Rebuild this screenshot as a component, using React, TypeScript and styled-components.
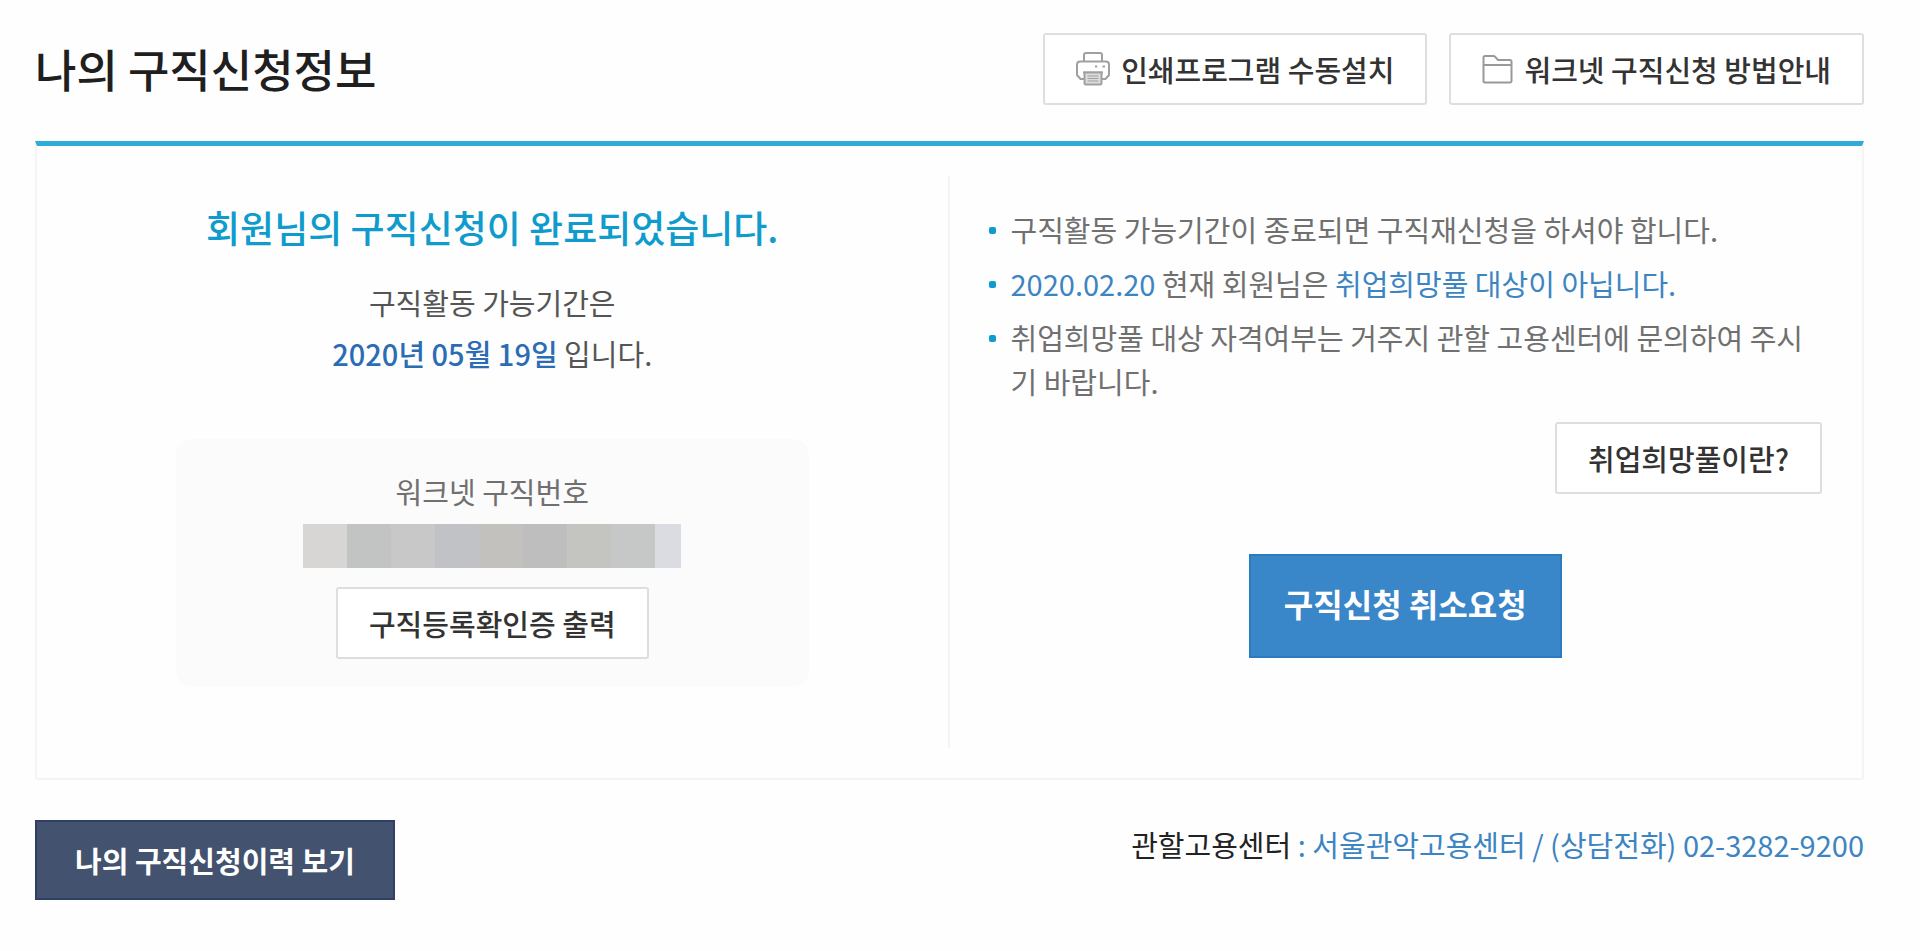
import React from "react";
import styled, { createGlobalStyle, css } from "styled-components";

const GlobalStyle = createGlobalStyle`
  *, *::before, *::after { box-sizing: border-box; }
  body {
    margin: 0;
    background: #fefefe;
    color: #707070;
    font-family: "Noto Sans CJK KR", "Noto Sans", sans-serif;
    font-size: 29px;
    line-height: 44px;
  }
  h1, h2, p, ul { margin: 0; padding: 0; }
  button { font-family: inherit; cursor: pointer; }
  a { color: inherit; text-decoration: none; }
`;

const Page = styled.main`
  padding: 33px 56px 52px 35px;
`;

const Header = styled.header`
  display: flex;
  align-items: center;
  justify-content: space-between;
  margin-bottom: 36px;
`;

const Title = styled.h1`
  color: #1f1f1f;
  font-size: 45px;
  font-weight: 500;
  line-height: 64px;
`;

const HeaderActions = styled.div`
  display: flex;
  gap: 22px;
`;

type ButtonKind = "outline" | "primary" | "dark";

const kinds = {
  outline: css`
    height: 72px;
    padding: 0 31px;
    border: 2px solid #dedede;
    border-radius: 3px;
    background: #fff;
    color: #333;
    font-size: 29px;
    font-weight: 500;
  `,
  primary: css`
    height: 104px;
    padding: 0 33px 6px;
    border: 2px solid #2a7bc0;
    background: #3986c9;
    color: #fff;
    font-size: 32px;
    font-weight: 700;
  `,
  dark: css`
    height: 80px;
    padding: 0 38px;
    border: 2px solid #2f4067;
    background: #43526f;
    color: #fff;
    font-size: 29px;
    font-weight: 700;
  `,
};

const Button = styled.button<{ $kind: ButtonKind }>`
  display: inline-flex;
  align-items: center;
  justify-content: center;
  gap: 11px;
  line-height: 44px;
  white-space: nowrap;
  ${({ $kind }) => kinds[$kind]}
`;

const Panel = styled.section`
  display: grid;
  grid-template-columns: 1fr 1fr;
  padding: 30px 4px 30px 0;
  border: 2px solid #f4f4f4;
  border-top: 5px solid #2eabd6;
  border-radius: 0 0 3px 3px;
`;

const StatusColumn = styled.div`
  display: flex;
  flex-direction: column;
  padding: 25px 139px 61px;
  text-align: center;
`;

const StatusTitle = styled.h2`
  color: #0f9ccd;
  font-size: 37px;
  font-weight: 500;
  line-height: 52px;
  white-space: nowrap;
`;

const Period = styled.p`
  margin-top: 24px;
  color: #555;
  font-size: 29px;
  line-height: 51px;
`;

const PeriodDate = styled.strong`
  color: #2a6db5;
  font-weight: 500;
`;

const NumberCard = styled.div`
  display: flex;
  flex-direction: column;
  align-items: center;
  margin-top: 60px;
  padding: 30px 0 28px;
  border-radius: 16px;
  background: #fbfbfb;
`;

const MaskedNumber = styled.div`
  display: flex;
  width: 378px;
  height: 44px;
  margin: 11px 0 19px;
`;

const MaskBlock = styled.span<{ $color: string }>`
  flex: 0 1 44px;
  background: ${({ $color }) => $color};

  &:last-child { flex: 1 1 0; }
`;

const GuideColumn = styled.div`
  display: flex;
  flex-direction: column;
  padding: 31px 36px 61px 39px;
  border-left: 2px solid #f4f4f4;
`;

const GuideList = styled.ul`
  display: flex;
  flex-direction: column;
  gap: 10px;
  list-style: none;
`;

const GuideItem = styled.li`
  display: flex;
  gap: 15px;
  word-break: break-all;

  &::before {
    content: "";
    flex: none;
    width: 7px;
    height: 7px;
    margin-top: 20px;
    border-radius: 2px;
    background: #0f9ccd;
  }
`;

const Blue = styled.span`
  color: #3d84c2;
`;

const GuideMore = styled.div`
  display: flex;
  justify-content: flex-end;
  margin-top: 19px;
`;

const CancelRow = styled.div`
  display: flex;
  justify-content: center;
  margin-top: 60px;
`;

const Footer = styled.footer`
  display: flex;
  align-items: flex-start;
  justify-content: space-between;
  margin-top: 40px;
`;

const Center = styled.p`
  padding-top: 2px;
  color: #3d84c2;
`;

const CenterLabel = styled.span`
  color: #222;
`;

const PrinterIcon = () => (
  <svg width="34" height="34" viewBox="0 0 34 34" fill="none" stroke="#a0a0a0" strokeWidth="2" aria-hidden="true">
    <path d="M8 9.500V3a2 2 0 0 1 2-2h14a2 2 0 0 1 2 2v6.500" />
    <path d="M8 27H4.500l-3.500-4V12.500a3 3 0 0 1 3-3h26a3 3 0 0 1 3 3V23l-3.500 4H26" />
    <path d="M7 20.500h20" />
    <path d="M8.500 20.500h17V31a1.500 1.500 0 0 1-1.500 1.500H10A1.500 1.500 0 0 1 8.500 31z" fill="#dcdcdc" />
    <path d="M11.500 24h11M11.500 26.500h11M11.500 29h11" strokeWidth="1" />
    <path d="M19 14.500h2.200M26.500 14.500h2.500" strokeWidth="2" />
  </svg>
);

const FolderIcon = () => (
  <svg width="31" height="30" viewBox="0 0 31 30" fill="none" stroke="#999" strokeWidth="2" aria-hidden="true">
    <path d="M1.500 27V3.500A1.500 1.500 0 0 1 3 2h8.500a2 2 0 0 1 1.500.6L16 6h12a1.500 1.500 0 0 1 1.500 1.500V27a1.500 1.500 0 0 1-1.500 1.500H3A1.500 1.500 0 0 1 1.500 27z" />
    <path d="M1.500 11h28" />
  </svg>
);

const maskColors = [
  "#d7d6d4", "#c2c4c4", "#c8c8c9", "#c0c2c6", "#c2c1be",
  "#bebebe", "#c4c4c1", "#c6c8c8", "#dbdce1",
];

export default function App() {
  return (
    <>
      <GlobalStyle />
      <Page>
        <Header>
          <Title>나의 구직신청정보</Title>
          <HeaderActions>
            <Button type="button" $kind="outline">
              <PrinterIcon />
              인쇄프로그램 수동설치
            </Button>
            <Button type="button" $kind="outline">
              <FolderIcon />
              워크넷 구직신청 방법안내
            </Button>
          </HeaderActions>
        </Header>

        <Panel>
          <StatusColumn>
            <StatusTitle>회원님의 구직신청이 완료되었습니다.</StatusTitle>
            <Period>
              구직활동 가능기간은
              <br />
              <PeriodDate>2020년 05월 19일</PeriodDate> 입니다.
            </Period>
            <NumberCard>
              <p>워크넷 구직번호</p>
              <MaskedNumber>
                {maskColors.map((color) => (
                  <MaskBlock key={color} $color={color} />
                ))}
              </MaskedNumber>
              <Button type="button" $kind="outline">구직등록확인증 출력</Button>
            </NumberCard>
          </StatusColumn>

          <GuideColumn>
            <GuideList>
              <GuideItem>
                <span>구직활동 가능기간이 종료되면 구직재신청을 하셔야 합니다.</span>
              </GuideItem>
              <GuideItem>
                <span>
                  <Blue>2020.02.20</Blue> 현재 회원님은 <Blue>취업희망풀 대상이 아닙니다.</Blue>
                </span>
              </GuideItem>
              <GuideItem>
                <span>취업희망풀 대상 자격여부는 거주지 관할 고용센터에 문의하여 주시기 바랍니다.</span>
              </GuideItem>
            </GuideList>
            <GuideMore>
              <Button type="button" $kind="outline">취업희망풀이란?</Button>
            </GuideMore>
            <CancelRow>
              <Button type="button" $kind="primary">구직신청 취소요청</Button>
            </CancelRow>
          </GuideColumn>
        </Panel>

        <Footer>
          <Button type="button" $kind="dark">나의 구직신청이력 보기</Button>
          <Center>
            <CenterLabel>관할고용센터</CenterLabel> : 서울관악고용센터 / (상담전화) 02-3282-9200
          </Center>
        </Footer>
      </Page>
    </>
  );
}
